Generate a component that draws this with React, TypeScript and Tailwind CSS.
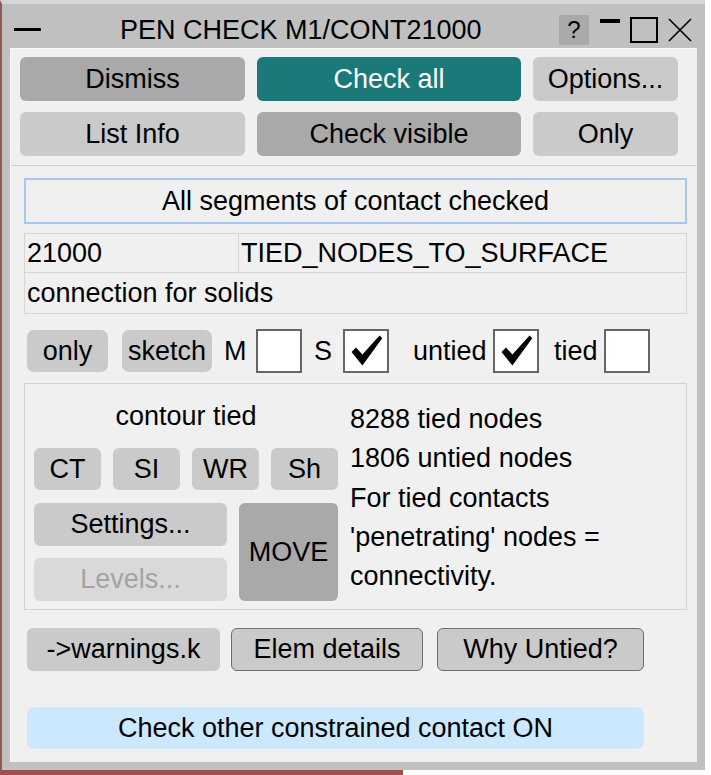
import React from "react";

const font = { fontFamily: '"Liberation Sans", Arial, sans-serif' };

function Check() {
  return (
    <svg viewBox="0 0 44 42" className="w-[40px] h-[38px]">
      <path d="M6 22 L11 17 L18 25 L37 4 L40 7 L18 37 Z" fill="#000" />
    </svg>
  );
}

function Box({ checked }: { checked?: boolean }) {
  return (
    <div className="w-[46px] h-[44px] bg-white border-2 border-[#666666] flex items-center justify-center">
      {checked ? <Check /> : null}
    </div>
  );
}

export default function App() {
  return (
    <div className="w-[711px] h-[775px] bg-white text-black overflow-hidden" style={font}>
      <div className="w-[705px] h-[770px] bg-[#c0c0c0] border-t-4 border-t-[#d6d6d6] border-l-2 border-l-[#8a5a5a] flex flex-col">
        {/* title bar */}
        <div className="h-[44px] flex items-start shrink-0">
          <div className="ml-[12px] mt-[24px] w-[27px] h-[3px] bg-black" />
          <div className="ml-[79px] mt-[9px] text-[27px] leading-[34px]">PEN CHECK M1/CONT21000</div>
          <div className="ml-auto mt-[11px] w-[30px] h-[30px] bg-[#a9a9a9] flex items-center justify-center text-[24px] leading-none">?</div>
          <div className="ml-[11px] mt-[15px] w-[20px] h-[4px] bg-black" />
          <div className="ml-[10px] mt-[13px] w-[28px] h-[26px] border-2 border-black" />
          <svg viewBox="0 0 24 24" className="ml-[10px] mt-[14px] mr-[13px] w-[24px] h-[24px]">
            <path d="M1 1 L23 23 M23 1 L1 23" stroke="#000" strokeWidth="1.6" fill="none" />
          </svg>
        </div>

        {/* content panel */}
        <div className="ml-[8px] w-[687px] h-[714px] bg-[#f0f0f0] border-t border-l border-[#fafafa] flex flex-col text-[27px]">
          <div className="pt-[8px] pl-[9px] pr-[19px]">
            <div className="grid grid-cols-[225px_264px_145px] gap-x-[12px] gap-y-[11px]">
              <div className="h-[44px] rounded-[6px] bg-[#a9a9a9] flex items-center justify-center">Dismiss</div>
              <div className="h-[44px] rounded-[6px] bg-[#1b7a79] text-white flex items-center justify-center">Check all</div>
              <div className="h-[44px] rounded-[6px] bg-[#cacaca] flex items-center justify-center">Options...</div>
              <div className="h-[44px] rounded-[6px] bg-[#cacaca] flex items-center justify-center">List Info</div>
              <div className="h-[44px] rounded-[6px] bg-[#a9a9a9] flex items-center justify-center">Check visible</div>
              <div className="h-[44px] rounded-[6px] bg-[#cacaca] flex items-center justify-center">Only</div>
            </div>
          </div>

          <div className="mt-[9px] h-[1px] bg-[#d2d2d2]" />

          <div className="ml-[13px] mr-[10px] mt-[12px] h-[46px] border-2 border-[#a6c8ec] flex items-center justify-center">
            All segments of contact checked
          </div>

          <div className="ml-[13px] mr-[10px] mt-[9px] border border-[#d6d6d6]">
            <div className="h-[39px] flex border-b border-[#d6d6d6]">
              <div className="w-[214px] border-r border-[#d6d6d6] pl-[2px] flex items-center">21000</div>
              <div className="pl-[2px] flex items-center">TIED_NODES_TO_SURFACE</div>
            </div>
            <div className="h-[40px] pl-[2px] flex items-center">connection for solids</div>
          </div>

          <div className="mt-[15px] pl-[16px] flex items-center h-[44px]">
            <div className="w-[81px] h-[42px] rounded-[7px] bg-[#cacaca] flex items-center justify-center">only</div>
            <div className="ml-[14px] w-[90px] h-[42px] rounded-[7px] bg-[#cacaca] flex items-center justify-center">sketch</div>
            <div className="ml-[12px] w-[32px]">M</div>
            <Box />
            <div className="ml-[12px] w-[29px]">S</div>
            <Box checked />
            <div className="ml-[24px] w-[80px]">untied</div>
            <Box checked />
            <div className="ml-[15px] w-[50px]">tied</div>
            <Box />
          </div>

          <div className="ml-[13px] mr-[10px] mt-[10px] h-[227px] border border-[#d2d2d2] flex pl-[9px]">
            <div className="w-[304px] flex flex-col">
              <div className="mt-[17px] h-[30px] leading-[30px] text-center">contour tied</div>
              <div className="mt-[17px] flex gap-x-[12px]">
                <div className="w-[67px] h-[42px] rounded-[6px] bg-[#cacaca] flex items-center justify-center">CT</div>
                <div className="w-[67px] h-[42px] rounded-[6px] bg-[#cacaca] flex items-center justify-center">SI</div>
                <div className="w-[67px] h-[42px] rounded-[6px] bg-[#cacaca] flex items-center justify-center">WR</div>
                <div className="w-[67px] h-[42px] rounded-[6px] bg-[#cacaca] flex items-center justify-center">Sh</div>
              </div>
              <div className="mt-[13px] flex gap-x-[12px]">
                <div className="w-[193px] flex flex-col gap-y-[12px]">
                  <div className="h-[43px] rounded-[6px] bg-[#cacaca] flex items-center justify-center">Settings...</div>
                  <div className="h-[43px] rounded-[6px] bg-[#d9d9d9] text-[#a3a3a3] flex items-center justify-center">Levels...</div>
                </div>
                <div className="w-[99px] h-[98px] rounded-[6px] bg-[#a9a9a9] flex items-center justify-center">MOVE</div>
              </div>
            </div>
            <div className="ml-[12px] pt-[16px] leading-[39.3px]">
              <div>8288 tied nodes</div>
              <div>1806 untied nodes</div>
              <div>For tied contacts</div>
              <div>'penetrating' nodes =</div>
              <div>connectivity.</div>
            </div>
          </div>

          <div className="mt-[18px] pl-[16px] flex items-center">
            <div className="w-[193px] h-[43px] rounded-[6px] bg-[#cacaca] flex items-center justify-center">-&gt;warnings.k</div>
            <div className="ml-[11px] w-[192px] h-[43px] rounded-[6px] bg-[#cacaca] border border-[#6e6e6e] flex items-center justify-center">Elem details</div>
            <div className="ml-[14px] w-[207px] h-[43px] rounded-[6px] bg-[#cacaca] border border-[#6e6e6e] flex items-center justify-center">Why Untied?</div>
          </div>

          <div className="mt-[36px] ml-[16px] w-[617px] h-[42px] rounded-[7px] bg-[#cce8ff] flex items-center justify-center">
            Check other constrained contact ON
          </div>
        </div>
      </div>
      <div className="w-[403px] h-[5px] bg-[#a44d4d]" />
    </div>
  );
}
